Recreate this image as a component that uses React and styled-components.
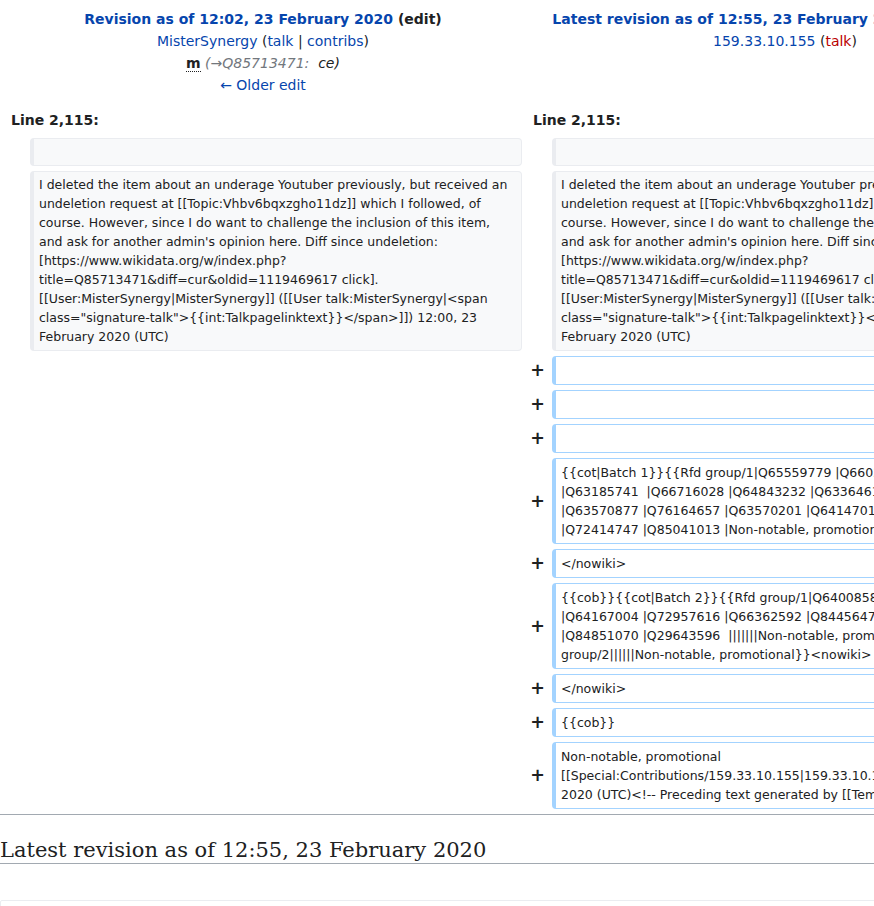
import React from 'react';
import styled, { createGlobalStyle } from 'styled-components';

const GlobalStyle = createGlobalStyle`
  html, body {
    margin: 0;
    padding: 0;
    background: #fff;
    overflow: hidden;
  }
  body {
    font-family: "DejaVu Sans", sans-serif;
    font-size: 14px;
    line-height: 1.6;
    color: #202122;
  }
`;

const Page = styled.div`
  width: 100%;
  overflow: hidden;
`;

const DiffTable = styled.table`
  width: 1048px;
  table-layout: fixed;
  border-collapse: separate;
  border-spacing: 4px 5px;
  margin: -1px 0 0;
`;

const MarkerCol = styled.col`
  width: 22px;
`;

const ContentCol = styled.col`
  width: 492px;
`;

const HeaderCell = styled.td`
  text-align: center;
  vertical-align: top;
  padding: 4px 0 3px;
  line-height: 22px;
`;

const TitleLine = styled.div`
  font-weight: bold;
  white-space: nowrap;
`;

const Link = styled.a`
  color: ${p => (p.$missing ? '#ba0000' : '#0645ad')};
  text-decoration: none;
  cursor: pointer;
`;

const Minor = styled.abbr`
  font-weight: bold;
  text-decoration: none;
  border-bottom: 1px dotted #202122;
  cursor: help;
`;

const Comment = styled.span`
  font-style: italic;
  color: #202122;
`;

const AutoComment = styled.span`
  color: #72777d;
`;

const LineNo = styled.td`
  font-weight: bold;
  padding: 5px 7px 2px;
  line-height: 22px;
`;

const Marker = styled.td`
  text-align: right;
  vertical-align: middle;
  font-weight: bold;
  font-size: 17.5px;
  line-height: 1.2;
  padding: 0 3px 0 0;
`;

const DiffLine = styled.td`
  font-size: 12.5px;
  line-height: 19px;
  vertical-align: top;
  white-space: pre-wrap;
  word-wrap: break-word;
  border-style: solid;
  border-width: 1px 1px 1px 4px;
  border-radius: 4px;
  padding: ${p => (p.$kind === 'context' ? '3px 6px 4px 5px' : '4px 6px 4px 5px')};
  background: ${p => (p.$kind === 'context' ? '#f8f9fa' : '#fff')};
  border-color: ${p => (p.$kind === 'context' ? '#eaecf0' : '#a3d3ff')};
  color: #202122;
`;

const Divider = styled.hr`
  border: 0;
  border-top: 1px solid #a2a9b1;
  margin: 0;
  height: 0;
`;

const SectionTitle = styled.h2`
  font-family: "DejaVu Serif", serif;
  font-weight: normal;
  font-size: 21px;
  line-height: 26px;
  margin: 22px 0 0;
  border-bottom: 1px solid #a2a9b1;
  white-space: nowrap;
`;

const Panel = styled.div`
  margin-top: 36px;
  height: 60px;
  border: 1px solid #eaecf0;
  border-radius: 2px;
  width: 1040px;
`;

const contextText =
  "I deleted the item about an underage Youtuber previously, but received an undeletion request at [[Topic:Vhbv6bqxzgho11dz]] which I followed, of course. However, since I do want to challenge the inclusion of this item, and ask for another admin's opinion here. Diff since undeletion: [https://www.wikidata.org/w/index.php?title=Q85713471&diff=cur&oldid=1119469617 click]. [[User:MisterSynergy|MisterSynergy]] ([[User talk:MisterSynergy|<span class=\"signature-talk\">{{int:Talkpagelinktext}}</span>]]) 12:00, 23 February 2020 (UTC)";

const addedLines = [
  '',
  '',
  '',
  [
    '{{cot|Batch 1}}{{Rfd group/1|Q65559779 |Q66023553 |Q65561384',
    '|Q63185741  |Q66716028 |Q64843232 |Q63364614 |Q64147020',
    '|Q63570877 |Q76164657 |Q63570201 |Q64147016 |Q72953305',
    '|Q72414747 |Q85041013 |Non-notable, promotional}}<nowiki>',
  ].join('\n'),
  '</nowiki>',
  [
    '{{cob}}{{cot|Batch 2}}{{Rfd group/1|Q64008585 |Q64009036',
    '|Q64167004 |Q72957616 |Q66362592 |Q84456471 |Q84456524',
    '|Q84851070 |Q29643596  |||||||Non-notable, promotional}}{{Rfd',
    'group/2||||||Non-notable, promotional}}<nowiki>',
  ].join('\n'),
  '</nowiki>',
  '{{cob}}',
  [
    'Non-notable, promotional',
    '[[Special:Contributions/159.33.10.155|159.33.10.155]] 12:55, 23',
    '2020 (UTC)<!-- Preceding text generated by [[Template:Unsigned]]',
  ].join('\n'),
];

export default function App() {
  return (
    <Page>
      <GlobalStyle />
      <DiffTable>
        <colgroup>
          <MarkerCol />
          <ContentCol />
          <MarkerCol />
          <ContentCol />
        </colgroup>
        <tbody>
          <tr>
            <HeaderCell colSpan={2}>
              <TitleLine>
                <Link>Revision as of 12:02, 23 February 2020</Link> (edit)
              </TitleLine>
              <div>
                <Link>MisterSynergy</Link> (<Link>talk</Link> | <Link>contribs</Link>)
              </div>
              <div>
                <Minor title="This is a minor edit">m</Minor>{' '}
                <Comment>
                  <AutoComment>(→Q85713471:{'\u00a0'}</AutoComment> ce)
                </Comment>
              </div>
              <div>
                <Link>← Older edit</Link>
              </div>
            </HeaderCell>
            <HeaderCell colSpan={2}>
              <TitleLine>
                <Link>Latest revision as of 12:55, 23 February 2020</Link> (edit) (undo)
              </TitleLine>
              <div>
                <Link>159.33.10.155</Link> (<Link $missing>talk</Link>)
              </div>
            </HeaderCell>
          </tr>
          <tr>
            <LineNo colSpan={2}>Line 2,115:</LineNo>
            <LineNo colSpan={2}>Line 2,115:</LineNo>
          </tr>
          <tr>
            <Marker />
            <DiffLine $kind="context">{' '}</DiffLine>
            <Marker />
            <DiffLine $kind="context">{' '}</DiffLine>
          </tr>
          <tr>
            <Marker />
            <DiffLine $kind="context">{contextText}</DiffLine>
            <Marker />
            <DiffLine $kind="context">{contextText}</DiffLine>
          </tr>
          {addedLines.map((text, i) => (
            <tr key={i}>
              <td colSpan={2} />
              <Marker>+</Marker>
              <DiffLine $kind="added">{text || ' '}</DiffLine>
            </tr>
          ))}
        </tbody>
      </DiffTable>
      <Divider />
      <SectionTitle>Latest revision as of 12:55, 23 February 2020</SectionTitle>
      <Panel />
    </Page>
  );
}
